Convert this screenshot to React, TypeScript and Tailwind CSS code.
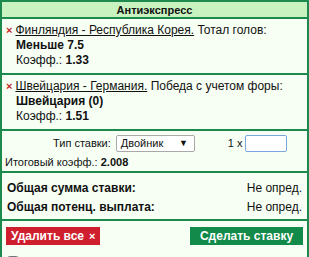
import React from "react";

const bets = [
  {
    match: "Финляндия - Республика Корея.",
    market: "Тотал голов:",
    pick: "Меньше 7.5",
    odds: "1.33",
  },
  {
    match: "Швейцария - Германия.",
    market: "Победа с учетом форы:",
    pick: "Швейцария (0)",
    odds: "1.51",
  },
];

const BetItem = ({ bet }: { bet: (typeof bets)[number] }) => (
  <div className="border-b-2 border-[#1c8a4c] pl-[4px] pr-2 pt-[4px] pb-[5px] leading-[15px]">
    <div className="whitespace-nowrap">
      <span className="mr-[3px] font-bold text-[11px] text-[#c62828]">×</span>
      <span className="underline">{bet.match}</span> {bet.market}
    </div>
    <div className="pl-[10px] font-bold">{bet.pick}</div>
    <div className="pl-[10px]">
      Коэфф.: <span className="font-bold">{bet.odds}</span>
    </div>
  </div>
);

const App = () => {
  const [stake, setStake] = React.useState("");

  return (
    <div className="w-[309px] h-[257px] overflow-hidden bg-white font-['Liberation_Sans',Arial,sans-serif] text-[12px] text-[#111]">
      <div className="border-2 border-[#1c8a4c] bg-[#f7fff5] h-[300px]">
        <div className="h-[17px] border-b-2 border-[#1c8a4c] bg-[#c8f3c0] text-center text-[11px] font-bold leading-[16px]">
          Антиэкспресс
        </div>

        {bets.map(bet => (
          <BetItem key={bet.match} bet={bet} />
        ))}

        <div className="border-b-2 border-[#1c8a4c] pl-[3px] pt-[4px] pb-[1px] text-[11px] whitespace-nowrap">
          <div className="flex items-center h-[17px]">
            <span className="ml-[48px]">Тип ставки:</span>
            <div className="ml-[5px] flex h-[17px] w-[79px] items-center justify-between rounded-[2px] border border-[#a9a9a9] bg-white pl-[4px] pr-[6px]">
              <span>Двойник</span>
              <span className="text-[9px]">▼</span>
            </div>
            <span className="ml-[33px]">1 x</span>
            <input
              value={stake}
              onChange={e => setStake(e.target.value)}
              className="ml-[3px] h-[17px] w-[42px] rounded-[2px] border border-[#7aa7e0] bg-white px-[2px] text-[12px] outline-none"
            />
          </div>
          <div className="mt-[2px] leading-[16px]">
            Итоговый коэфф.: <span className="font-bold">2.008</span>
          </div>
        </div>

        <div className="border-b-2 border-[#1c8a4c] px-[5px] pt-[6px] pb-[2px] font-bold leading-[19px]">
          <div className="flex justify-between">
            <span>Общая сумма ставки:</span>
            <span className="font-normal">Не опред.</span>
          </div>
          <div className="flex justify-between">
            <span>Общая потенц. выплата:</span>
            <span className="font-normal">Не опред.</span>
          </div>
        </div>

        <div className="flex justify-between px-[4px] pt-[6px]">
          <button className="flex h-[18px] items-center bg-[#cf1f2e] px-[5px] text-[12px] font-bold text-white">
            Удалить все <span className="ml-[5px] text-[11px]">×</span>
          </button>
          <button className="flex h-[18px] w-[113px] items-center justify-center bg-[#128a4a] text-[12px] font-bold text-white">
            Сделать ставку
          </button>
        </div>

        <label className="mt-[8px] flex items-center px-[5px]">
          <input type="checkbox" className="h-[12px] w-[12px]" />
          <span className="ml-[6px]">Сохранить купон</span>
        </label>
      </div>
    </div>
  );
};

export default App;
